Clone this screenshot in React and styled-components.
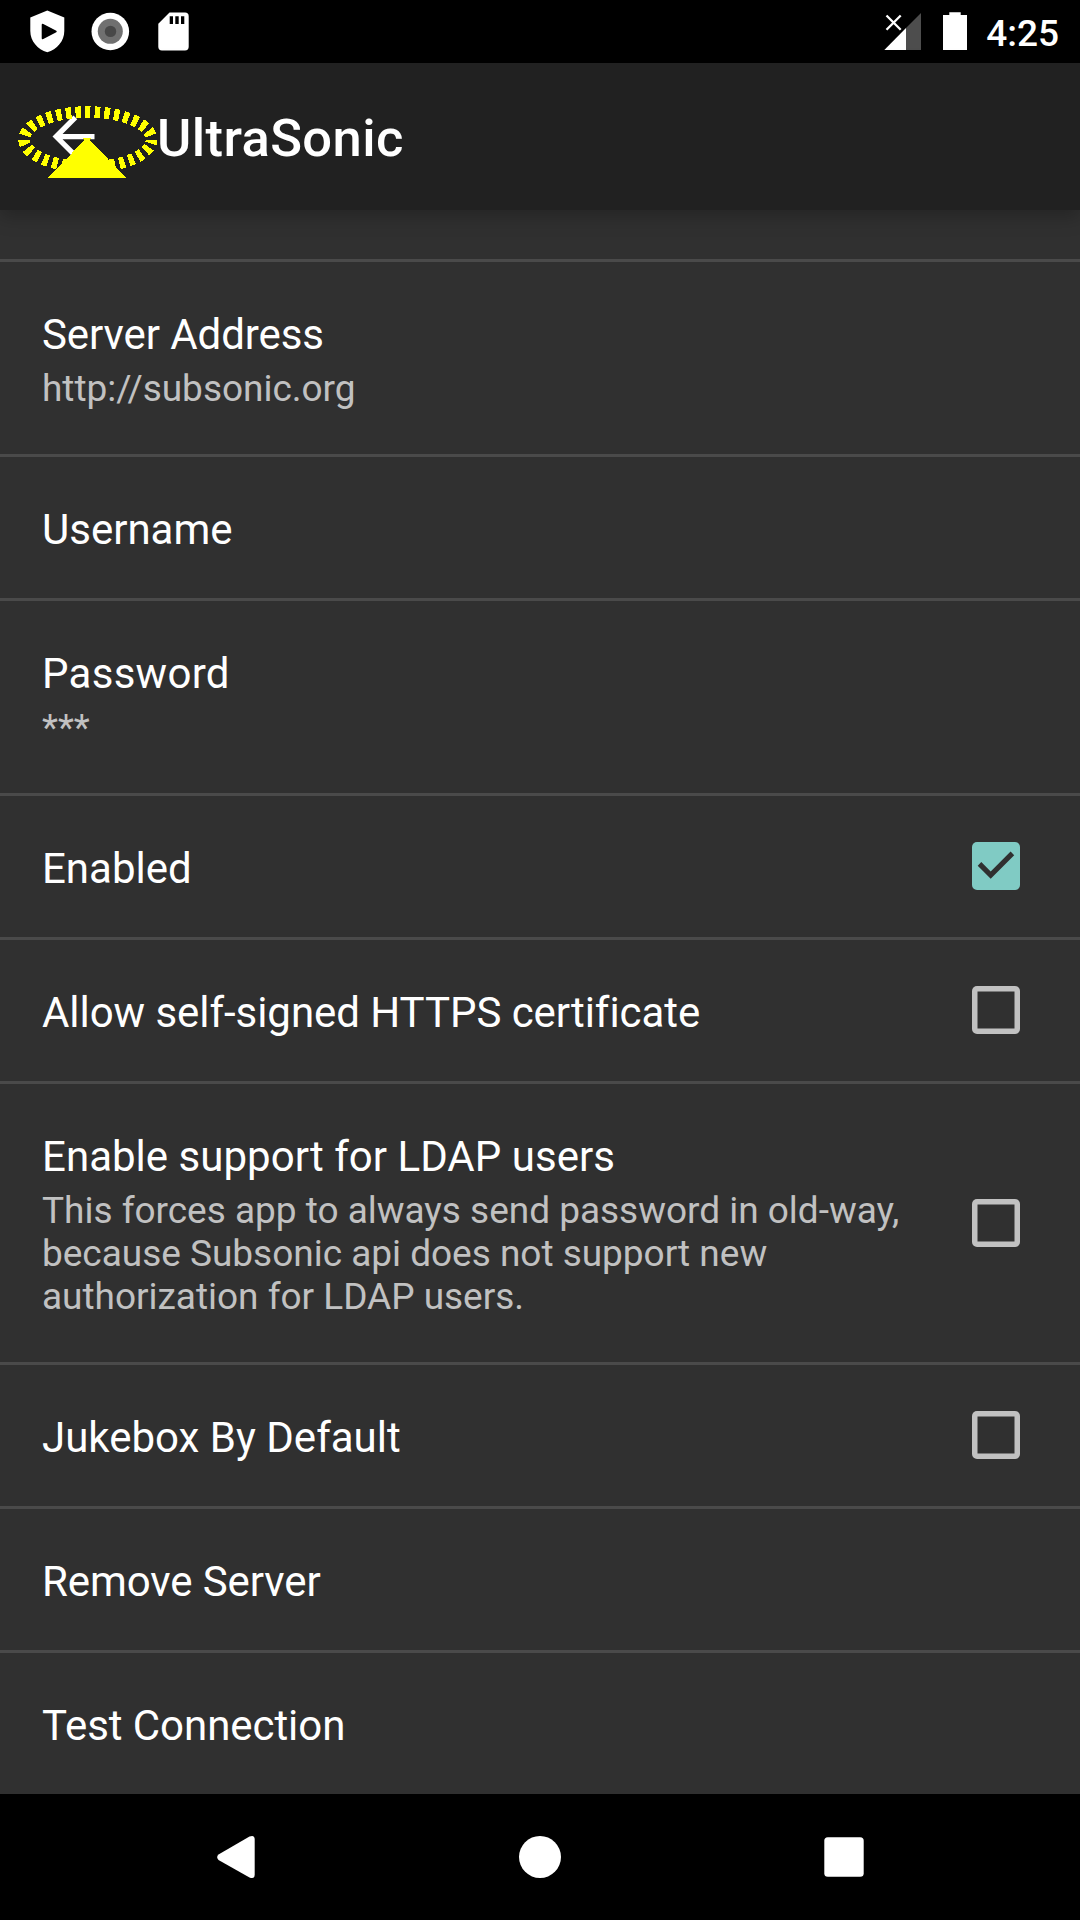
import React from "react";
import styled, { createGlobalStyle } from "styled-components";

const GlobalStyle = createGlobalStyle`
  * { box-sizing: border-box; }
  body { margin: 0; background: #000; }
`;

const Screen = styled.div`
  width: 1080px;
  height: 1920px;
  display: flex;
  flex-direction: column;
  overflow: hidden;
  background: #303030;
  color: #fff;
  font-family: Roboto, sans-serif;
`;

const StatusBar = styled.header`
  height: 63px;
  flex: none;
  display: flex;
  align-items: center;
  justify-content: space-between;
  padding: 0 21px 0 30px;
  background: #000;
`;

const StatusGroup = styled.div`
  display: flex;
  align-items: center;
  gap: ${(p) => p.$gap}px;
`;

const Icon = styled.svg`
  display: block;
  flex: none;
  overflow: visible;
`;

const Clock = styled.span`
  font-size: 37px;
  font-weight: 500;
  line-height: 43px;
  padding-top: 3px;
`;

const AppBar = styled.div`
  height: 147px;
  flex: none;
  position: relative;
  z-index: 1;
  display: flex;
  align-items: center;
  padding-left: 42px;
  background: #212121;
  box-shadow: 0 6px 18px rgba(0, 0, 0, 0.26);
`;

const AppTitle = styled.h1`
  margin: 0 0 0 52px;
  padding-top: 3px;
  font-size: 52.5px;
  font-weight: 500;
  line-height: 62px;
  letter-spacing: 0.4px;
`;

const TouchMarker = styled.svg`
  position: absolute;
  left: 18px;
  top: 43px;
  overflow: visible;
`;

const Settings = styled.main`
  flex: 1;
  display: flex;
  flex-direction: column;
`;

const ScrolledRow = styled.div`
  height: 52px;
  flex: none;
  border-bottom: 3px solid #4a4a4a;
`;

const Row = styled.div`
  flex: none;
  display: flex;
  align-items: center;
  justify-content: space-between;
  padding: 0 60px 0 42px;
  border-bottom: 3px solid #4a4a4a;

  &:last-child {
    border-bottom: none;
  }
`;

const RowText = styled.div`
  width: 876px;
  padding: 48px 0 44px;
`;

const RowTitle = styled.div`
  font-size: 42px;
  line-height: 49px;
  letter-spacing: ${(p) => p.$tracking || 0}px;
`;

const RowSummary = styled.div`
  margin-top: 8px;
  font-size: 37px;
  line-height: 43px;
  letter-spacing: -0.02px;
  color: #c1c1c1;
`;

const CheckBox = styled.span`
  width: 48px;
  height: 48px;
  flex: none;
  margin-bottom: 1px;
  border-radius: 5px;
  box-shadow: ${(p) => (p.$checked ? "none" : "inset 0 0 0 5.5px #c1c1c1")};
  background: ${(p) => (p.$checked ? "#80cbc4" : "transparent")};
`;

const NavBar = styled.nav`
  height: 126px;
  flex: none;
  display: flex;
  justify-content: center;
  align-items: center;
  background: #000;
`;

const NavButton = styled.div`
  width: 304px;
  display: flex;
  justify-content: center;
`;

const settings = [
  { title: "Server Address", summary: "http://subsonic.org", tracking: -0.08 },
  { title: "Username" },
  { title: "Password", summary: "***", tracking: 0.28 },
  { title: "Enabled", checked: true },
  { title: "Allow self-signed HTTPS certificate", checked: false, tracking: -0.05 },
  {
    title: "Enable support for LDAP users",
    summary:
      "This forces app to always send password in old-way, because Subsonic api does not support new authorization for LDAP users.",
    checked: false,
    tracking: 0.03,
  },
  { title: "Jukebox By Default", checked: false },
  { title: "Remove Server", tracking: -0.09 },
  { title: "Test Connection", tracking: -0.06 },
];

function Setting({ title, summary, checked, tracking }) {
  return (
    <Row>
      <RowText>
        <RowTitle $tracking={tracking}>{title}</RowTitle>
        {summary && <RowSummary>{summary}</RowSummary>}
      </RowText>
      {checked !== undefined && (
        <CheckBox $checked={checked}>
          {checked && (
            <Icon width="48" height="48" viewBox="0 0 48 48">
              <path d="M5.7 23.7 9.3 20.1 18.7 29.5 38.6 9.6 42.2 13.2 18.7 36.8Z" fill="#303030" />
            </Icon>
          )}
        </CheckBox>
      )}
    </Row>
  );
}

export default function App() {
  return (
    <Screen>
      <GlobalStyle />
      <StatusBar>
        <StatusGroup $gap={0}>
          <Icon width="160" height="63" viewBox="30 0 160 63">
            <path
              fill="#fff"
              fillRule="evenodd"
              d="M47.3 10.5 64.3 17.5V31C64.3 41 57 49.5 47.3 52.3 37.6 49.5 30.3 41 30.3 31V17.5ZM41.7 25V38Q41.7 39.8 43.3 39L56.3 32.2Q57.3 31.5 56.3 30.8L43.3 24Q41.7 23.2 41.7 25Z"
            />
            <circle cx="110.3" cy="31.5" r="18.8" fill="#fff" />
            <circle cx="110.3" cy="31.3" r="12.5" fill="#707070" />
            <circle cx="110.5" cy="31.4" r="5.7" fill="#484848" />
            <path
              fill="#fff"
              fillRule="evenodd"
              d="M169.5 12.6H185Q188.7 12.6 188.7 16.3V46.7Q188.7 50.4 185 50.4H162Q158.3 50.4 158.3 46.7V23.8ZM169.7 16.3V24H173V16.3ZM175.3 16.3V24H178.7V16.3ZM181 16.3V24H184.3V16.3Z"
            />
          </Icon>
        </StatusGroup>
        <StatusGroup $gap={19}>
          <Icon width="83" height="63" viewBox="884 0 83 63">
            <path d="M921 13V50H906V28Z" fill="#4d4d4d" />
            <path d="M906 28V50H884.3Z" fill="#fff" />
            <path d="M886.5 15.5 900.7 29.7M900.7 15.5 886.5 29.7" stroke="#fff" strokeWidth="2.3" />
            <path d="M949.3 12.3H960.7V15H967V50H943V15H949.3Z" fill="#fff" />
          </Icon>
          <Clock>4:25</Clock>
        </StatusGroup>
      </StatusBar>

      <AppBar>
        <Icon width="63" height="63" viewBox="0 0 24 24">
          <path
            fill="#fff"
            d="M20 11H7.83l5.59-5.59L12 4l-8 8 8 8 1.41-1.41L7.83 13H20v-2z"
          />
        </Icon>
        <AppTitle>UltraSonic</AppTitle>
        <TouchMarker width="140" height="73" viewBox="18 106 140 73" shapeRendering="crispEdges">
          <ellipse
            cx="87.8"
            cy="139.5"
            rx="63.8"
            ry="27.5"
            fill="none"
            stroke="#ff0"
            strokeWidth="11.6"
            strokeDasharray="5.4 4.25"
            strokeDashoffset="1.3"
          />
          <path d="M82.5 138H91.5L89.5 140 126.5 178H48L84.5 140Z" fill="#ff0" />
        </TouchMarker>
      </AppBar>

      <Settings>
        <ScrolledRow />
        {settings.map((s) => (
          <Setting key={s.title} {...s} />
        ))}
      </Settings>

      <NavBar>
        <NavButton>
          <Icon width="38" height="42" viewBox="0 0 38 42">
            <path
              fill="#fff"
              d="M32.5.5Q37.7-1.5 37.7 3.5V38.5Q37.7 43.5 32.5 41.5L1.5 24Q-1.2 21.2 1.5 18.5Z"
            />
          </Icon>
        </NavButton>
        <NavButton>
          <Icon width="42" height="42" viewBox="0 0 42 42">
            <circle cx="21" cy="21" r="21" fill="#fff" />
          </Icon>
        </NavButton>
        <NavButton>
          <Icon width="40" height="40" viewBox="0 0 40 40">
            <rect x="0.3" y="0.3" width="39.4" height="39.4" rx="3.5" fill="#fff" />
          </Icon>
        </NavButton>
      </NavBar>
    </Screen>
  );
}
